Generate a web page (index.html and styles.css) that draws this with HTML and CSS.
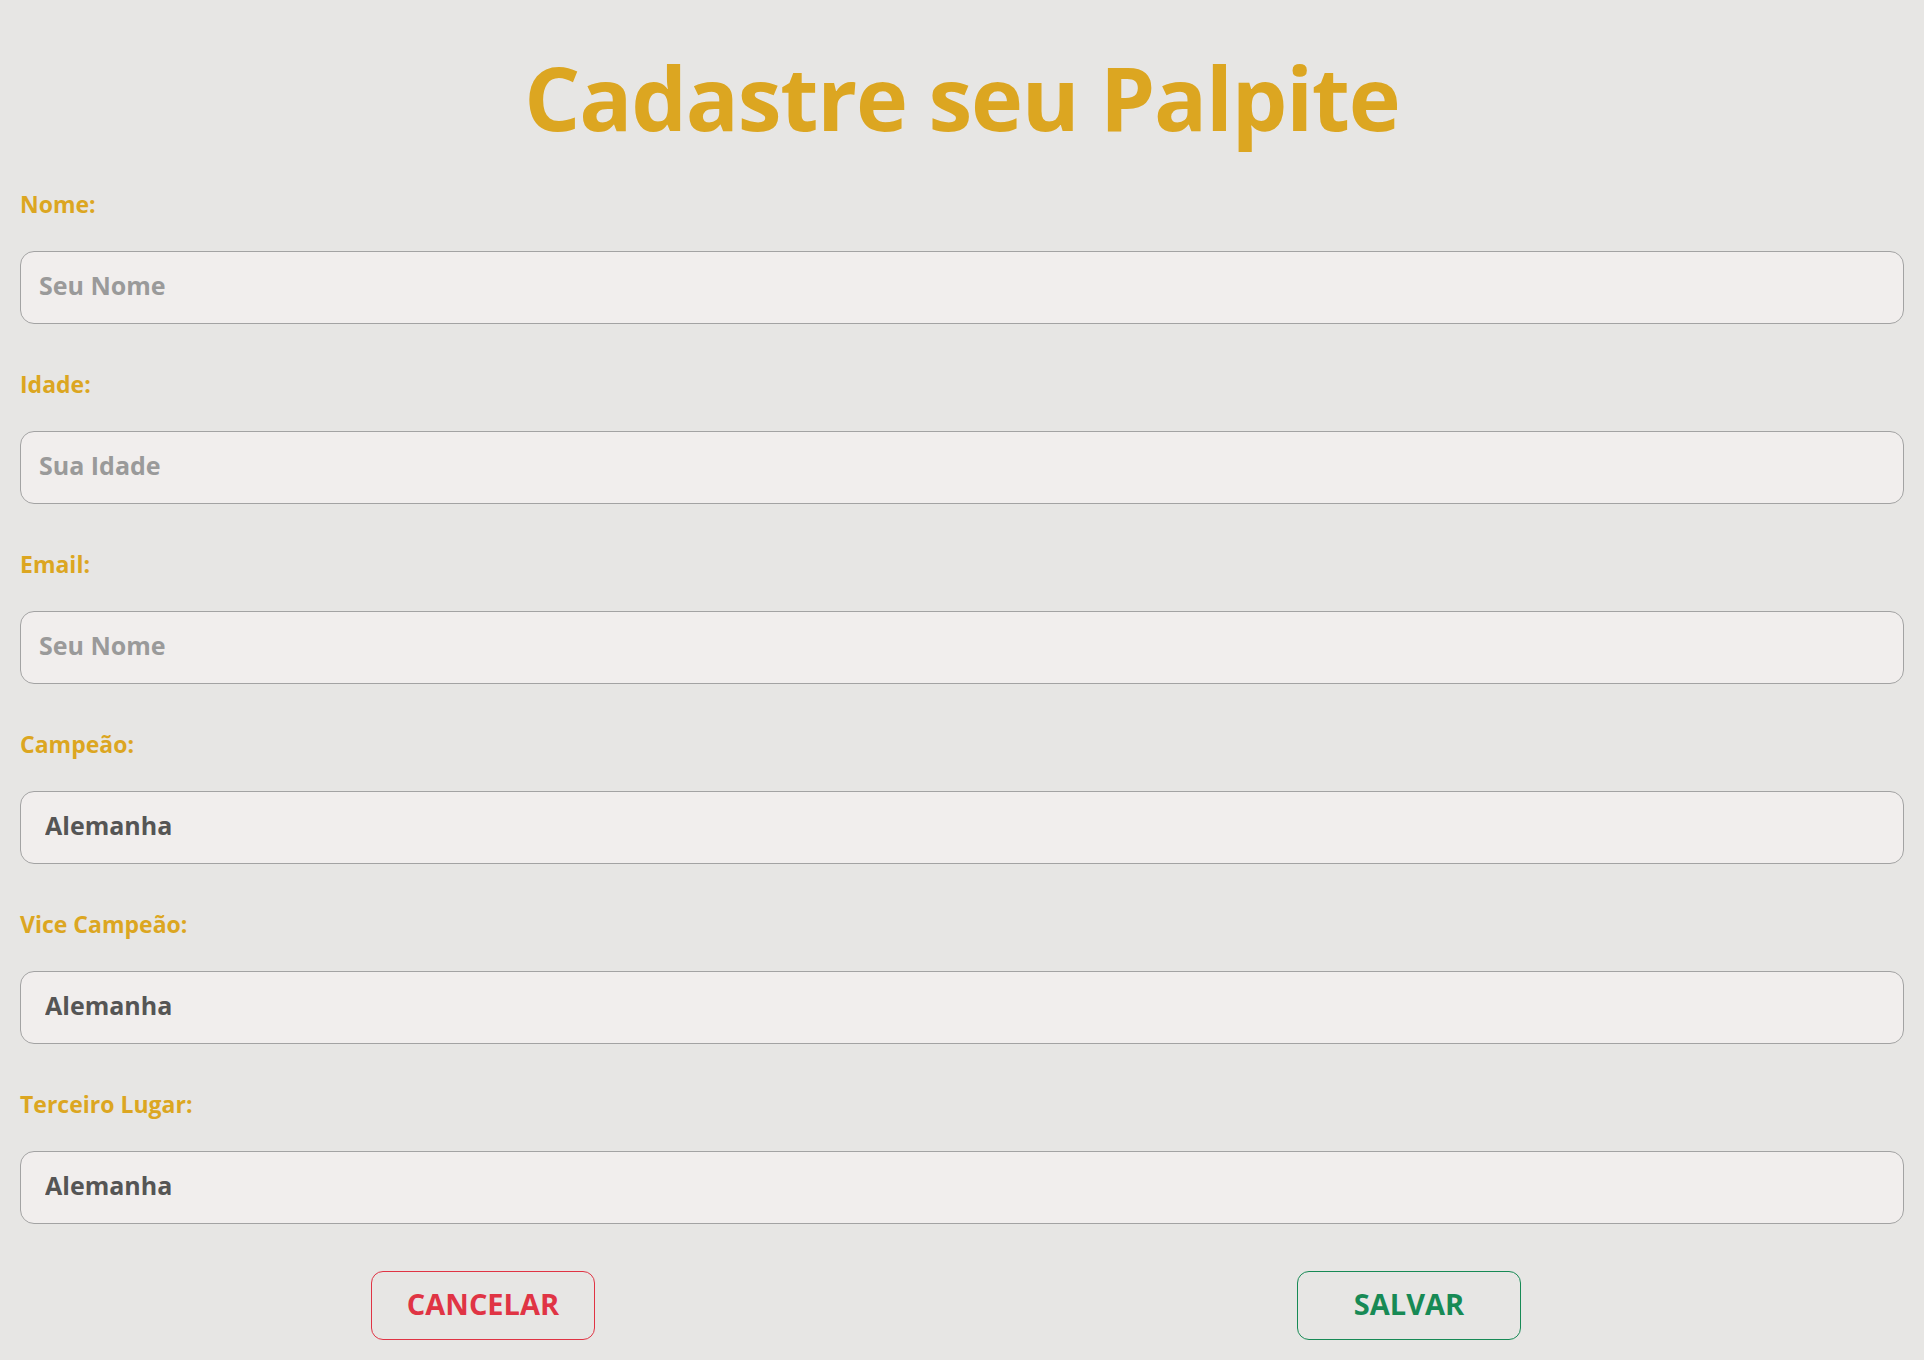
FILE: index.html
```html
<!DOCTYPE html>
<html lang="pt-BR">
<head>
<meta charset="utf-8">
<title>Cadastre seu Palpite</title>
<link rel="stylesheet" href="styles.css">
</head>
<body>
<main class="page">
  <h1 class="title">Cadastre seu Palpite</h1>
  <form class="form">
    <div class="field">
      <label class="label" for="nome">Nome:</label>
      <input class="control" id="nome" type="text" placeholder="Seu Nome">
    </div>
    <div class="field">
      <label class="label" for="idade">Idade:</label>
      <input class="control" id="idade" type="text" placeholder="Sua Idade">
    </div>
    <div class="field">
      <label class="label" for="email">Email:</label>
      <input class="control" id="email" type="text" placeholder="Seu Nome">
    </div>
    <div class="field">
      <label class="label" for="campeao">Campeão:</label>
      <select class="control select" id="campeao"><option>Alemanha</option></select>
    </div>
    <div class="field">
      <label class="label" for="vice">Vice Campeão:</label>
      <select class="control select" id="vice"><option>Alemanha</option></select>
    </div>
    <div class="field">
      <label class="label" for="terceiro">Terceiro Lugar:</label>
      <select class="control select" id="terceiro"><option>Alemanha</option></select>
    </div>
    <div class="actions">
      <button type="button" class="btn btn-cancel">CANCELAR</button>
      <button type="button" class="btn btn-save">SALVAR</button>
    </div>
  </form>
</main>
</body>
</html>
```

FILE: styles.css
```css
* { box-sizing: border-box; }
html, body { margin: 0; padding: 0; }
body {
  background: #e7e6e4;
  font-family: "Open Sans", "Noto Sans", sans-serif;
}
.page {
  padding: 0 20px;
}
.title {
  margin: 0;
  padding-top: 38px;
  height: 172px;
  text-align: center;
  color: #dca621;
  font-size: 88px;
  font-weight: 700;
  line-height: 118px;
  letter-spacing: -1.2px;
}
.form {
  display: flex;
  flex-direction: column;
}
.field {
  display: flex;
  flex-direction: column;
  height: 180px;
}
.label {
  color: #dca621;
  font-size: 23px;
  font-weight: 700;
  line-height: 30px;
  margin-top: 17px;
  height: 62px;
}
.control {
  width: 100%;
  height: 73px;
  border: 1px solid #a3a3a3;
  border-radius: 14px;
  background: #f1eeed;
  font-family: inherit;
  font-size: 25px;
  font-weight: 700;
  color: #555;
  padding: 0 18px 5px;
  outline: none;
}
.control::placeholder {
  color: #9a9a9a;
}
.select {
  appearance: none;
  -webkit-appearance: none;
  padding-left: 24px;
  color: #555;
}
.actions {
  display: flex;
  justify-content: space-around;
  padding-right: 32px;
  padding-top: 19px;
}
.btn {
  width: 224px;
  height: 69px;
  border-radius: 12px;
  background: transparent;
  font-family: inherit;
  font-size: 29px;
  font-weight: 700;
  padding: 0 0 4px;
}
.btn-cancel {
  border: 1px solid #e03444;
  color: #e03444;
}
.btn-save {
  border: 1px solid #178a55;
  color: #178a55;
}
```
